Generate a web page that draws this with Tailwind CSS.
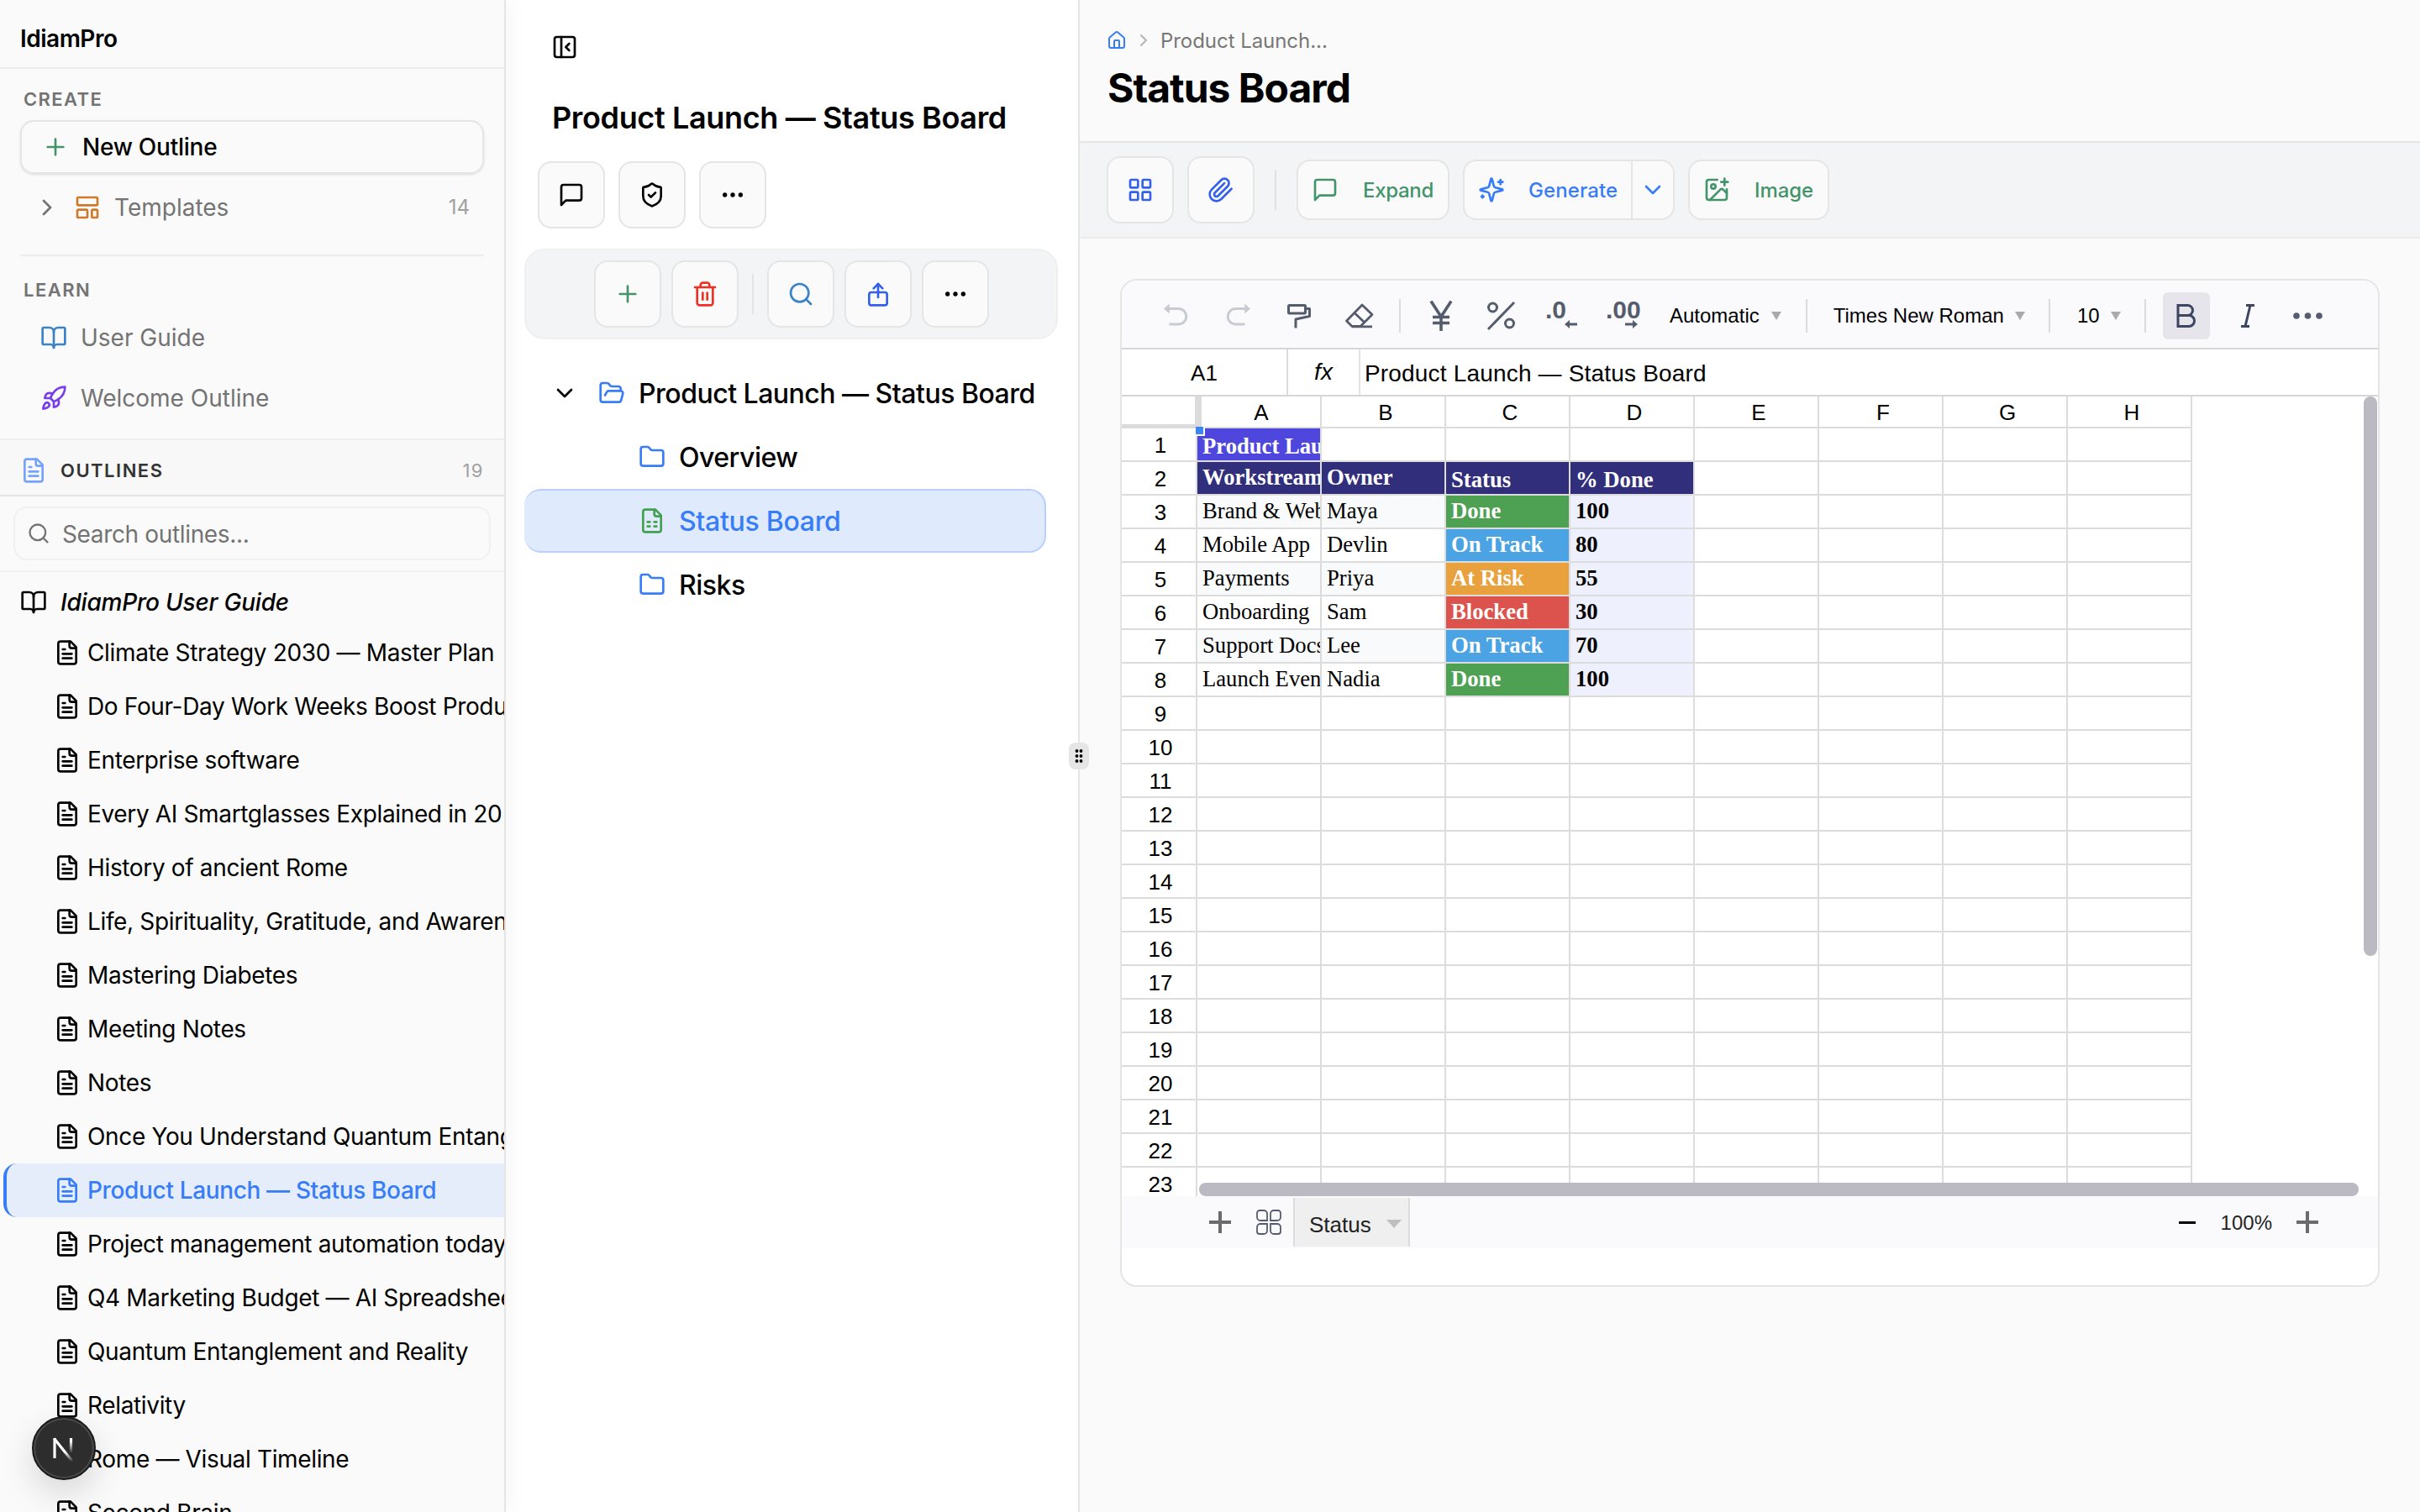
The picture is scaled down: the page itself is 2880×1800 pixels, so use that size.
<!DOCTYPE html>
<html lang="en">
<head>
    <meta charset="UTF-8">
    <meta name="viewport" content="width=device-width, initial-scale=1.0">
    <title>IdiamPro</title>
    <script src="https://cdn.jsdelivr.net/npm/@tailwindcss/browser@4"></script>
</head>
<body class="w-[2880px] h-[1800px] overflow-hidden bg-white text-black font-['Inter',sans-serif]">

    <!-- Icon sprite -->
    <svg class="hidden" fill="none">
        <symbol id="plus" viewBox="0 0 24 24"><path d="M5 12h14M12 5v14"/></symbol>
        <symbol id="chevron-right" viewBox="0 0 24 24"><path d="m9 18 6-6-6-6"/></symbol>
        <symbol id="chevron-down" viewBox="0 0 24 24"><path d="m6 9 6 6 6-6"/></symbol>
        <symbol id="template" viewBox="0 0 24 24"><rect width="18" height="7" x="3" y="3" rx="1"/><rect width="9" height="7" x="3" y="14" rx="1"/><rect width="5" height="7" x="16" y="14" rx="1"/></symbol>
        <symbol id="book" viewBox="0 0 24 24"><path d="M12 7v14"/><path d="M3 18a1 1 0 0 1-1-1V4a1 1 0 0 1 1-1h5a4 4 0 0 1 4 4 4 4 0 0 1 4-4h5a1 1 0 0 1 1 1v13a1 1 0 0 1-1 1h-6a3 3 0 0 0-3 3 3 3 0 0 0-3-3z"/></symbol>
        <symbol id="rocket" viewBox="0 0 24 24"><path d="M4.5 16.5c-1.5 1.26-2 5-2 5s3.74-.5 5-2c.71-.84.7-2.13-.09-2.91a2.18 2.18 0 0 0-2.91-.09z"/><path d="m12 15-3-3a22 22 0 0 1 2-3.95A12.88 12.88 0 0 1 22 2c0 2.72-.78 7.5-6 11a22.35 22.35 0 0 1-4 2z"/><path d="M9 12H4s.55-3.03 2-4c1.62-1.08 5 0 5 0"/><path d="M12 15v5s3.03-.55 4-2c1.08-1.62 0-5 0-5"/></symbol>
        <symbol id="file-text" viewBox="0 0 24 24"><path d="M15 2H6a2 2 0 0 0-2 2v16a2 2 0 0 0 2 2h12a2 2 0 0 0 2-2V7Z"/><path d="M14 2v4a2 2 0 0 0 2 2h4"/><path d="M10 9H8"/><path d="M16 13H8"/><path d="M16 17H8"/></symbol>
        <symbol id="file-sheet" viewBox="0 0 24 24"><path d="M15 2H6a2 2 0 0 0-2 2v16a2 2 0 0 0 2 2h12a2 2 0 0 0 2-2V7Z"/><path d="M14 2v4a2 2 0 0 0 2 2h4"/><path d="M8 13h2"/><path d="M14 13h2"/><path d="M8 17h2"/><path d="M14 17h2"/></symbol>
        <symbol id="search" viewBox="0 0 24 24"><circle cx="11" cy="11" r="8"/><path d="m21 21-4.3-4.3"/></symbol>
        <symbol id="panel" viewBox="0 0 24 24"><rect width="18" height="18" x="3" y="3" rx="2"/><path d="M9 3v18"/><path d="m16 15-3-3 3-3"/></symbol>
        <symbol id="message" viewBox="0 0 24 24"><path d="M21 15a2 2 0 0 1-2 2H7l-4 4V5a2 2 0 0 1 2-2h14a2 2 0 0 1 2 2z"/></symbol>
        <symbol id="shield" viewBox="0 0 24 24"><path d="M20 13c0 5-3.5 7.5-7.66 8.95a1 1 0 0 1-.67-.01C7.5 20.5 4 18 4 13V6a1 1 0 0 1 1-1c2 0 4.5-1.2 6.24-2.72a1.17 1.17 0 0 1 1.52 0C14.51 3.81 17 5 19 5a1 1 0 0 1 1 1z"/><path d="m9 12 2 2 4-4"/></symbol>
        <symbol id="more" viewBox="0 0 24 24"><circle cx="12" cy="12" r="1"/><circle cx="19" cy="12" r="1"/><circle cx="5" cy="12" r="1"/></symbol>
        <symbol id="trash" viewBox="0 0 24 24"><path d="M3 6h18"/><path d="M19 6v14c0 1-1 2-2 2H7c-1 0-2-1-2-2V6"/><path d="M8 6V4c0-1 1-2 2-2h4c1 0 2 1 2 2v2"/><path d="M10 11v6"/><path d="M14 11v6"/></symbol>
        <symbol id="share" viewBox="0 0 24 24"><rect x="4" y="10.5" width="16" height="11.5" rx="2"/><path d="M12 3v12"/><path d="m8 7 4-4 4 4"/></symbol>
        <symbol id="folder" viewBox="0 0 24 24"><path d="M20 20a2 2 0 0 0 2-2V8a2 2 0 0 0-2-2h-7.9a2 2 0 0 1-1.69-.9L9.6 3.9A2 2 0 0 0 7.93 3H4a2 2 0 0 0-2 2v13a2 2 0 0 0 2 2Z"/></symbol>
        <symbol id="folder-open" viewBox="0 0 24 24"><path d="m6 14 1.5-2.9A2 2 0 0 1 9.24 10H20a2 2 0 0 1 1.94 2.5l-1.54 6a2 2 0 0 1-1.95 1.5H4a2 2 0 0 1-2-2V5a2 2 0 0 1 2-2h3.9a2 2 0 0 1 1.69.9l.81 1.2a2 2 0 0 0 1.67.9H18a2 2 0 0 1 2 2v2"/></symbol>
        <symbol id="home" viewBox="0 0 24 24"><path d="M15 21v-8a1 1 0 0 0-1-1h-4a1 1 0 0 0-1 1v8"/><path d="M3 10a2 2 0 0 1 .709-1.528l7-5.999a2 2 0 0 1 2.582 0l7 5.999A2 2 0 0 1 21 10v9a2 2 0 0 1-2 2H5a2 2 0 0 1-2-2z"/></symbol>
        <symbol id="grid" viewBox="0 0 24 24"><rect width="7" height="7" x="3" y="3" rx="1"/><rect width="7" height="7" x="14" y="3" rx="1"/><rect width="7" height="7" x="14" y="14" rx="1"/><rect width="7" height="7" x="3" y="14" rx="1"/></symbol>
        <symbol id="clip" viewBox="0 0 24 24"><path d="m21.44 11.05-9.19 9.19a6 6 0 0 1-8.49-8.49l8.57-8.57A4 4 0 1 1 18 8.84l-8.59 8.57a2 2 0 0 1-2.83-2.83l8.49-8.48"/></symbol>
        <symbol id="sparkles" viewBox="0 0 24 24"><path d="M9.937 15.5A2 2 0 0 0 8.5 14.063l-6.135-1.582a.5.5 0 0 1 0-.962L8.5 9.936A2 2 0 0 0 9.937 8.5l1.582-6.135a.5.5 0 0 1 .963 0L14.063 8.5A2 2 0 0 0 15.5 9.937l6.135 1.581a.5.5 0 0 1 0 .964L15.5 14.063a2 2 0 0 0-1.437 1.437l-1.582 6.135a.5.5 0 0 1-.963 0z"/><path d="M20 3v4"/><path d="M22 5h-4"/><path d="M4 17v2"/><path d="M5 18H3"/></symbol>
        <symbol id="image-plus" viewBox="0 0 24 24"><path d="M16 5h6"/><path d="M19 2v6"/><path d="M21 11.5V19a2 2 0 0 1-2 2H5a2 2 0 0 1-2-2V5a2 2 0 0 1 2-2h7.5"/><path d="m21 15-3.086-3.086a2 2 0 0 0-2.828 0L6 21"/><circle cx="9" cy="9" r="2"/></symbol>
    </svg>

    <div class="flex h-full">

        <!-- Left sidebar -->
        <aside class="relative z-10 w-[602px] shrink-0 h-full overflow-hidden bg-[#fafafa] border-r-2 border-[#e5e5e5] shadow-[2px_0_24px_rgba(0,0,0,0.05)] text-[28px]">
            <div class="h-[82px] border-b-2 border-[#ececec] pl-6 pt-3 flex items-center font-semibold tracking-[-0.5px]">IdiamPro</div>

            <div class="h-[440px] px-6 pt-5">
                <div class="h-8 pl-1 flex items-center text-[22px] font-semibold text-[#737373] tracking-[1.4px]">CREATE</div>
                <div class="mt-[9px] h-16 rounded-2xl border-2 border-[#e5e5e5] shadow-sm flex items-center pl-6 font-medium">
                    <svg class="size-8 text-[#43946a]" fill="none" stroke="currentColor" stroke-width="2" stroke-linecap="round" stroke-linejoin="round"><use href="#plus"/></svg>
                    <span class="ml-4 tracking-[-0.25px]">New Outline</span>
                </div>
                <div class="mt-2 h-16 flex items-center pl-4 pr-[17px] text-[#737373]">
                    <svg class="size-8" fill="none" stroke="currentColor" stroke-width="2" stroke-linecap="round" stroke-linejoin="round"><use href="#chevron-right"/></svg>
                    <svg class="ml-4 size-8 text-[#cf7a2b]" fill="none" stroke="currentColor" stroke-width="2" stroke-linecap="round" stroke-linejoin="round"><use href="#template"/></svg>
                    <span class="ml-4">Templates</span>
                    <span class="ml-auto text-2xl text-[#a0a0a0]">14</span>
                </div>
                <div class="mt-6 h-[2px] bg-[#ececec]"></div>
                <div class="mt-6 h-8 pl-1 flex items-center text-[22px] font-semibold text-[#737373] tracking-[1.5px]">LEARN</div>
                <div class="mt-[9px] h-16 flex items-center pl-6 text-[#737373]">
                    <svg class="size-8 text-[#3a83c4]" fill="none" stroke="currentColor" stroke-width="2" stroke-linecap="round" stroke-linejoin="round"><use href="#book"/></svg>
                    <span class="ml-4">User Guide</span>
                </div>
                <div class="mt-2 h-16 flex items-center pl-6 text-[#737373]">
                    <svg class="size-8 text-[#7a3fe8]" fill="none" stroke="currentColor" stroke-width="2" stroke-linecap="round" stroke-linejoin="round"><use href="#rocket"/></svg>
                    <span class="ml-4">Welcome Outline</span>
                </div>
            </div>

            <div class="h-[69px] border-y-2 border-t-[#ededed] border-b-[#e5e5e5] bg-[#f8f8f8] pl-6 pr-6 pt-[7px] flex items-center text-[22px] font-semibold text-[#333]">
                <svg class="size-8 text-[#74a3fb]" fill="none" stroke="currentColor" stroke-width="2" stroke-linecap="round" stroke-linejoin="round"><use href="#file-text"/></svg>
                <span class="ml-4 tracking-[1.5px]">OUTLINES</span>
                <span class="ml-auto font-normal text-[#a0a0a0] tracking-[1.5px]">19</span>
            </div>
            <div class="h-[90px] border-b-2 border-[#f0f0f0] px-4 pt-3">
                <div class="h-16 rounded-2xl border-2 border-[#f0f0f0] flex items-center pl-[14px] text-[#737373]">
                    <svg class="size-7" fill="none" stroke="currentColor" stroke-width="2" stroke-linecap="round" stroke-linejoin="round"><use href="#search"/></svg>
                    <span class="ml-[14px] pt-[2px] tracking-[-0.35px]">Search outlines...</span>
                </div>
            </div>
            <div class="h-16 pt-2 pl-6 flex items-center font-medium italic">
                <svg class="size-8" fill="none" stroke="currentColor" stroke-width="2" stroke-linecap="round" stroke-linejoin="round"><use href="#book"/></svg>
                <span class="ml-4 tracking-[-0.2px]">IdiamPro User Guide</span>
            </div>
            <div id="outlines" class="tracking-[-0.35px]"></div>
        </aside>

        <!-- Outline tree -->
        <section class="w-[683px] shrink-0 h-full border-r-2 border-[#e5e5e5] bg-white pl-[22px]">
            <div class="h-[112px] pl-8 flex items-center">
                <svg class="size-8" fill="none" stroke="currentColor" stroke-width="2" stroke-linecap="round" stroke-linejoin="round"><use href="#panel"/></svg>
            </div>
            <div class="h-[56px] pl-[33px] flex items-center text-4xl font-semibold tracking-[-0.36px]">Product Launch — Status Board</div>
            <div class="mt-6 pl-4 flex gap-4">
                <div class="size-20 rounded-2xl border-2 border-[#e5e5e5] bg-[#fafafa] flex items-center justify-center"><svg class="size-8" fill="none" stroke="currentColor" stroke-width="2" stroke-linecap="round" stroke-linejoin="round"><use href="#message"/></svg></div>
                <div class="size-20 rounded-2xl border-2 border-[#e5e5e5] bg-[#fafafa] flex items-center justify-center"><svg class="size-8" fill="none" stroke="currentColor" stroke-width="2" stroke-linecap="round" stroke-linejoin="round"><use href="#shield"/></svg></div>
                <div class="size-20 rounded-2xl border-2 border-[#e5e5e5] bg-[#fafafa] flex items-center justify-center"><svg class="size-8" fill="none" stroke="currentColor" stroke-width="2" stroke-linecap="round" stroke-linejoin="round"><use href="#more"/></svg></div>
            </div>
            <div class="mt-6 w-[635px] h-[108px] rounded-3xl border-2 border-[#efeff0] bg-[#f3f4f6] flex items-center justify-center gap-3">
                <div class="size-20 rounded-2xl border-2 border-[#e5e5e5] bg-[#fafafa] flex items-center justify-center text-[#43946a]"><svg class="size-8" fill="none" stroke="currentColor" stroke-width="2" stroke-linecap="round" stroke-linejoin="round"><use href="#plus"/></svg></div>
                <div class="size-20 rounded-2xl border-2 border-[#e5e5e5] bg-[#fafafa] flex items-center justify-center text-[#ee3124]"><svg class="size-8" fill="none" stroke="currentColor" stroke-width="2" stroke-linecap="round" stroke-linejoin="round"><use href="#trash"/></svg></div>
                <div class="w-[2px] h-12 mx-1 bg-[#e5e5e5]"></div>
                <div class="size-20 rounded-2xl border-2 border-[#e5e5e5] bg-[#fafafa] flex items-center justify-center text-[#3a83c4]"><svg class="size-8" fill="none" stroke="currentColor" stroke-width="2" stroke-linecap="round" stroke-linejoin="round"><use href="#search"/></svg></div>
                <div class="size-20 rounded-2xl border-2 border-[#e5e5e5] bg-[#fafafa] flex items-center justify-center text-[#3461eb]"><svg class="size-8" fill="none" stroke="currentColor" stroke-width="2" stroke-linecap="round" stroke-linejoin="round"><use href="#share"/></svg></div>
                <div class="size-20 rounded-2xl border-2 border-[#e5e5e5] bg-[#fafafa] flex items-center justify-center"><svg class="size-8" fill="none" stroke="currentColor" stroke-width="2" stroke-linecap="round" stroke-linejoin="round"><use href="#more"/></svg></div>
            </div>
            <div class="pt-[26px] text-[32px] font-medium tracking-[-0.5px]">
                <div class="h-[76px] flex items-center pl-8">
                    <svg class="size-8" fill="none" stroke="currentColor" stroke-width="2" stroke-linecap="round" stroke-linejoin="round"><use href="#chevron-down"/></svg>
                    <svg class="ml-6 size-8 text-[#377df7]" fill="none" stroke="currentColor" stroke-width="2" stroke-linecap="round" stroke-linejoin="round"><use href="#folder-open"/></svg>
                    <span class="ml-4 pt-[2px] whitespace-nowrap">Product Launch — Status Board</span>
                </div>
                <div class="h-[76px] flex items-center pl-[136px]">
                    <svg class="size-8 text-[#377df7]" fill="none" stroke="currentColor" stroke-width="2" stroke-linecap="round" stroke-linejoin="round"><use href="#folder"/></svg>
                    <span class="ml-4 pt-[2px]">Overview</span>
                </div>
                <div class="w-[621px] h-[76px] rounded-[20px] border-2 border-l-0 border-[#b9d0fa] bg-[#e0eafd] flex items-center pl-[136px] text-[#377df7]">
                    <svg class="size-8 text-[#43a050]" fill="none" stroke="currentColor" stroke-width="2" stroke-linecap="round" stroke-linejoin="round"><use href="#file-sheet"/></svg>
                    <span class="ml-4 pt-[2px] tracking-[-0.3px]">Status Board</span>
                </div>
                <div class="h-[76px] flex items-center pl-[136px]">
                    <svg class="size-8 text-[#377df7]" fill="none" stroke="currentColor" stroke-width="2" stroke-linecap="round" stroke-linejoin="round"><use href="#folder"/></svg>
                    <span class="ml-4 pt-[2px]">Risks</span>
                </div>
            </div>
        </section>

        <!-- Content pane -->
        <main class="w-[1595px] h-full bg-[#fafafa]">
            <header class="h-[170px] border-b-2 border-[#e5e5e5] pl-8 pt-[30px]">
                <div class="h-9 flex items-center text-2xl text-[#777]">
                    <svg class="size-6 text-[#377df7]" fill="none" stroke="currentColor" stroke-width="2" stroke-linecap="round" stroke-linejoin="round"><use href="#home"/></svg>
                    <svg class="ml-2 size-6 text-[#b5b5b5]" fill="none" stroke="currentColor" stroke-width="2" stroke-linecap="round" stroke-linejoin="round"><use href="#chevron-right"/></svg>
                    <span class="ml-2 pt-[2px] tracking-[-0.05px]">Product Launch...</span>
                </div>
                <div class="h-[56px] mt-[11px] pl-[1px] flex items-center text-[48px] font-bold tracking-[-1px]">Status Board</div>
            </header>
            <div class="h-[114px] border-b-2 border-[#ececed] bg-[#f3f4f6] pl-8 flex items-center gap-4 text-2xl font-medium">
                <div class="size-20 rounded-2xl border-2 border-[#e5e5e5] bg-[#fafafa] flex items-center justify-center text-[#3461eb]"><svg class="size-8" fill="none" stroke="currentColor" stroke-width="2" stroke-linecap="round" stroke-linejoin="round"><use href="#grid"/></svg></div>
                <div class="size-20 rounded-2xl border-2 border-[#e5e5e5] bg-[#fafafa] flex items-center justify-center text-[#3461eb]"><svg class="size-8" fill="none" stroke="currentColor" stroke-width="2" stroke-linecap="round" stroke-linejoin="round"><use href="#clip"/></svg></div>
                <div class="w-[2px] h-12 mx-2 bg-[#e0e0e2]"></div>
                <div class="w-[182px] h-[72px] rounded-2xl border-2 border-[#e5e5e5] bg-[#fafafa] flex items-center pl-4 text-[#43946a]">
                    <svg class="size-8" fill="none" stroke="currentColor" stroke-width="2" stroke-linecap="round" stroke-linejoin="round"><use href="#message"/></svg>
                    <span class="ml-[29px] pt-[2px] tracking-[-0.3px]">Expand</span>
                </div>
                <div class="w-[252px] h-[72px] rounded-2xl border-2 border-[#e5e5e5] bg-[#fafafa] flex items-center pl-4 text-[#377df7]">
                    <svg class="size-8" fill="none" stroke="currentColor" stroke-width="2" stroke-linecap="round" stroke-linejoin="round"><use href="#sparkles"/></svg>
                    <span class="ml-7 pt-[2px] tracking-[0.1px]">Generate</span>
                    <span class="ml-auto w-[50px] h-full border-l-2 border-[#e5e5e5] flex items-center justify-center"><svg class="size-8" fill="none" stroke="currentColor" stroke-width="2" stroke-linecap="round" stroke-linejoin="round"><use href="#chevron-down"/></svg></span>
                </div>
                <div class="w-[168px] h-[72px] rounded-2xl border-2 border-[#e5e5e5] bg-[#fafafa] flex items-center pl-4 text-[#43946a]">
                    <svg class="size-8" fill="none" stroke="currentColor" stroke-width="2" stroke-linecap="round" stroke-linejoin="round"><use href="#image-plus"/></svg>
                    <span class="ml-[29px] pt-[2px] tracking-[-0.1px]">Image</span>
                </div>
            </div>

            <!-- Spreadsheet card -->
            <div class="mt-12 ml-12 w-[1499px] h-[1200px] rounded-[20px] border-2 border-[#e5e5e5] bg-white overflow-hidden font-['Liberation_Sans',sans-serif]">
                <div class="h-[82px] pt-1 border-b-2 border-[#d6d6d8] bg-[#fafafd] flex items-center text-2xl text-[#545c6e]">
                    <svg class="ml-[48px] w-8 h-8 text-[#c9cbd3]" viewBox="0 0 32 32" fill="none" stroke="currentColor" stroke-width="3"><path d="M8 7.500h11.500a9.200 9.200 0 0 1 0 18.500H8.500"/><path d="M2 7.500 8.800 1.500v12z" fill="currentColor" stroke="none"/></svg>
                    <svg class="ml-[43px] w-8 h-8 text-[#c9cbd3]" viewBox="0 0 32 32" fill="none" stroke="currentColor" stroke-width="3"><path d="M24 7.500H12.500a9.200 9.200 0 0 0 0 18.500h11"/><path d="M30 7.500 23.200 1.500v12z" fill="currentColor" stroke="none"/></svg>
                    <svg class="ml-[40px] w-8 h-8" viewBox="0 0 32 32" fill="none" stroke="currentColor" stroke-width="3" stroke-linejoin="round"><rect x="3.500" y="3.500" width="20" height="9.500" rx="1"/><path d="M24 7.500h4.500v9L12 20v10.500"/></svg>
                    <svg class="ml-[37px] w-9 h-8" viewBox="0 0 36 32" fill="none" stroke="currentColor" stroke-width="2.800" stroke-linejoin="round"><path d="M22 3 34 14.500 20 28.500H10L3.500 22z"/><path d="m13 12.500 12 11.500M10 28.800h24"/></svg>
                    <div class="ml-[30px] w-[2px] h-10 bg-[#dcdce0]"></div>
                    <svg class="ml-[32px] w-8 h-9" viewBox="0 0 32 36" fill="none" stroke="currentColor" stroke-width="3.600"><path d="M4 0.500 16 19 28 0.500M16 18v18M6 19.500h20M6 26.500h20"/></svg>
                    <svg class="ml-[36px] w-10 h-9" viewBox="0 0 40 36" fill="none" stroke="currentColor" stroke-width="3"><circle cx="9.500" cy="8" r="5"/><circle cx="29.500" cy="27" r="5"/><path d="M35 2 4 34"/></svg>
                    <div class="relative ml-[32px] w-[44px] h-9 font-bold leading-none text-[30px]"><span class="absolute -top-[4px] left-0">.0</span><svg class="absolute left-[23px] top-[22px] w-4 h-3" viewBox="0 0 16 12" fill="currentColor"><path d="M0 6 6 1v3.500h9v3H6V11z"/></svg></div>
                    <div class="relative ml-[28px] w-[44px] h-9 font-bold leading-none text-[30px]"><span class="absolute -top-[4px] left-0">.00</span><svg class="absolute left-[23px] top-[22px] w-4 h-3" viewBox="0 0 16 12" fill="currentColor"><path d="M15 6 9 1v3.500H0v3h9V11z"/></svg></div>
                    <span class="ml-[32px] text-black">Automatic</span>
                    <svg class="ml-[14px] w-3 h-[10px] text-[#aaa]" viewBox="0 0 12 10" fill="currentColor"><path d="M0 0h12L6 10z"/></svg>
                    <div class="ml-[29px] w-[2px] h-10 bg-[#dcdce0]"></div>
                    <span class="ml-[31px] text-black">Times New Roman</span>
                    <svg class="ml-[13px] w-3 h-[10px] text-[#aaa]" viewBox="0 0 12 10" fill="currentColor"><path d="M0 0h12L6 10z"/></svg>
                    <div class="ml-[28px] w-[2px] h-10 bg-[#dcdce0]"></div>
                    <span class="ml-[32px] text-black">10</span>
                    <svg class="ml-[13px] w-3 h-[10px] text-[#aaa]" viewBox="0 0 12 10" fill="currentColor"><path d="M0 0h12L6 10z"/></svg>
                    <div class="ml-[28px] w-[2px] h-10 bg-[#dcdce0]"></div>
                    <div class="ml-[20px] w-14 h-14 rounded-md bg-[#e7e5ec] flex items-center justify-center">
                        <svg class="w-7 h-8 text-[#3d4560]" viewBox="0 0 28 32" fill="none" stroke="currentColor" stroke-width="3"><path d="M4 3.500h11.500a6 6 0 0 1 0 12H4zM4 15.500h13a6.500 6.500 0 0 1 0 13H4z"/></svg>
                    </div>
                    <svg class="ml-[37px] w-4 h-8 text-[#3d4560]" viewBox="0 0 16 32" fill="none" stroke="currentColor" stroke-width="3"><path d="M6 3.500h10M0 28.500h10M11 3.500 5 28.500"/></svg>
                    <svg class="ml-[46px] w-9 h-2" viewBox="0 0 36 8" fill="currentColor"><circle cx="4" cy="4" r="3.800"/><circle cx="17.500" cy="4" r="3.800"/><circle cx="31" cy="4" r="3.800"/></svg>
                </div>
                <div class="h-[56px] border-b-2 border-[#d6d6d8] flex items-center">
                    <div class="w-[198px] h-full pt-[2px] border-r-2 border-[#dcdcdc] flex items-center justify-center text-[26px]">A1</div>
                    <div class="w-[86px] h-full border-r-2 border-[#e4e4e4] flex items-center justify-center text-[28px] italic">fx</div>
                    <span class="ml-[5px] pt-[3px] text-[28px] tracking-[0.18px]">Product Launch — Status Board</span>
                </div>
                <div class="relative h-[952px] overflow-hidden">
                    <div id="sheet" class="w-[1274px] text-[26px]"></div>
                    <!-- corner, selection handle and scrollbars lie over the grid -->
                    <div class="absolute left-0 top-0 w-[95px] h-[38px] border-r-8 border-b-[5px] border-[#dcdcdc]"></div>
                    <div class="absolute left-[88px] top-[36px] size-[11px] border-r-2 border-b-2 border-white bg-[#3b86f0]"></div>
                    <div class="absolute left-[1478px] top-0 w-4 h-[666px] rounded-full bg-[#bbb9c1]"></div>
                    <div class="absolute left-[92px] top-[936px] w-[1380px] h-4 rounded-full bg-[#bbb9c1]"></div>
                </div>
                <div class="h-[62px] bg-[#fafafd] flex items-center text-[26px] text-[#222]">
                    <svg class="ml-[104px] w-[26px] h-[26px] text-[#6b6b6b]" viewBox="0 0 26 26" stroke="currentColor" stroke-width="4"><path d="M0 13h26M13 0v26"/></svg>
                    <svg class="ml-[29px] w-8 h-8 text-[#545c6e]" viewBox="0 0 32 32" fill="none" stroke="currentColor" stroke-width="1.800"><path d="M5 2h5a4 4 0 0 1 4 4v8H6a4 4 0 0 1-4-4V5a3 3 0 0 1 3-3zM27 2h-5a4 4 0 0 0-4 4v8h8a4 4 0 0 0 4-4V5a3 3 0 0 0-3-3zM5 30h5a4 4 0 0 0 4-4v-8H6a4 4 0 0 0-4 4v5a3 3 0 0 0 3 3zM27 30h-5a4 4 0 0 1-4-4v-8h8a4 4 0 0 1 4 4v5a3 3 0 0 1-3 3z"/></svg>
                    <div class="ml-[13px] w-[139px] h-[58px] border-x-2 border-[#dcdcdc] bg-[#efefef] flex items-center pl-[17px] pt-1">
                        <span class="pt-[3px]">Status</span>
                        <svg class="ml-[18px] w-[18px] h-[10px] text-[#bfbfbf]" viewBox="0 0 18 10" fill="currentColor"><path d="M0 0h18L9 10z"/></svg>
                    </div>
                    <div class="ml-auto mr-[71px] flex items-center text-2xl">
                        <div class="w-5 h-[3px] bg-black"></div>
                        <span class="ml-[30px] pt-[2px]">100%</span>
                        <svg class="ml-[29px] w-[26px] h-[26px] text-[#6b6b6b]" viewBox="0 0 26 26" stroke="currentColor" stroke-width="4"><path d="M0 13h26M13 0v26"/></svg>
                    </div>
                </div>
            </div>
        </main>
    </div>

    <!-- Pane resize handle -->
    <div class="absolute z-20 left-[1272px] top-[884px] w-6 h-8 rounded-lg bg-[#e5e5e5] flex items-center justify-center">
        <svg class="w-3 h-6" viewBox="0 0 12 24"><circle cx="3.500" cy="6" r="1.900"/><circle cx="8.500" cy="6" r="1.900"/><circle cx="3.500" cy="12" r="1.900"/><circle cx="8.500" cy="12" r="1.900"/><circle cx="3.500" cy="18" r="1.900"/><circle cx="8.500" cy="18" r="1.900"/></svg>
    </div>

    <!-- Next.js dev badge -->
    <div class="absolute z-20 left-[38px] top-[1686px] size-[76px] rounded-full border-2 border-[#1b1b1b] bg-[#2d2d2d] ring-2 ring-inset ring-[#4a4a4a] shadow-[0_16px_40px_rgba(0,0,0,0.14)] flex items-center justify-center">
        <svg class="w-8 h-8" viewBox="0 0 32 32" fill="none" stroke-width="3.200">
            <defs>
                <linearGradient id="n1" x1="0" y1="0" x2="0" y2="1"><stop offset=".6" stop-color="#fff"/><stop offset="1" stop-color="#fff" stop-opacity=".1"/></linearGradient>
                <linearGradient id="n2" x1="0" y1="4" x2="0" y2="22" gradientUnits="userSpaceOnUse"><stop offset=".2" stop-color="#fff"/><stop offset="1" stop-color="#fff" stop-opacity="0"/></linearGradient>
            </defs>
            <path d="M5 28V4" stroke="#fff"/><path d="M4.500 4.500 25.500 31" stroke="url(#n1)"/><path d="M24.500 4v18" stroke="url(#n2)"/>
        </svg>
    </div>

    <script>
        // Sidebar outlines
        const outlines = [
            'Climate Strategy 2030 — Master Plan', 'Do Four-Day Work Weeks Boost Productivity?', 'Enterprise software',
            'Every AI Smartglasses Explained in 20 Minutes', 'History of ancient Rome', 'Life, Spirituality, Gratitude, and Awareness',
            'Mastering Diabetes', 'Meeting Notes', 'Notes', 'Once You Understand Quantum Entanglement',
            'Product Launch — Status Board', 'Project management automation today', 'Q4 Marketing Budget — AI Spreadsheet',
            'Quantum Entanglement and Reality', 'Relativity', 'Rome — Visual Timeline', 'Second Brain'
        ];
        document.getElementById('outlines').innerHTML = outlines.map(name => {
            const active = name === 'Product Launch — Status Board';
            return `<div class="${active ? 'ml-1 pl-[56px] border-l-4 border-[#377df7] rounded-l-2xl bg-[#e5edfb] text-[#377df7] font-medium' : 'pl-16'} h-16 flex items-center">
                <svg class="size-8 shrink-0" fill="none" stroke="currentColor" stroke-width="2" stroke-linecap="round" stroke-linejoin="round"><use href="#file-text"/></svg>
                <span class="ml-2 whitespace-nowrap">${name}</span>
            </div>`;
        }).join('');

        // Spreadsheet grid
        const statusColors = { 'Done': 'bg-[#4ea153]', 'On Track': 'bg-[#4ba3e3]', 'At Risk': 'bg-[#e8a13c]', 'Blocked': 'bg-[#dc524c]' };
        const rows = [
            ['Product Launch — Status Board'],
            ['Workstream', 'Owner', 'Status', '% Done'],
            ['Brand & Website', 'Maya', 'Done', '100'],
            ['Mobile App', 'Devlin', 'On Track', '80'],
            ['Payments', 'Priya', 'At Risk', '55'],
            ['Onboarding', 'Sam', 'Blocked', '30'],
            ['Support Docs', 'Lee', 'On Track', '70'],
            ['Launch Event', 'Nadia', 'Done', '100']
        ];
        function cellStyle(r, c, text) {
            if (!text) return '';
            if (r === 0) return 'bg-[#4f47dd] text-white font-bold pt-1';
            if (r === 1) return 'bg-[#312e7b] text-white font-bold ' + (c > 1 ? 'pt-1' : 'pb-[2px]');
            if (c === 2) return statusColors[text] + ' text-white font-bold pb-[2px]';
            if (c === 3) return 'bg-[#eef0fe] font-bold pb-[2px]';
            return r % 2 === 0 ? 'bg-[#f9fafb] pb-[2px]' : 'pb-[2px]';
        }
        let html = '<div class="flex h-[38px] border-b-2 border-[#dcdcdc]"><div class="w-[90px] border-r-2 border-[#dcdcdc]"></div>';
        for (const l of 'ABCDEFGH') html += `<div class="w-[148px] border-r-2 border-[#dcdcdc] pl-[6px] pt-[2px] flex items-center justify-center">${l}</div>`;
        html += '</div>';
        for (let r = 0; r < 23; r++) {
            html += `<div class="flex h-10 border-b-2 border-[#dcdcdc]"><div class="w-[90px] border-r-2 border-[#dcdcdc] pl-1 pt-[2px] flex items-center justify-center">${r + 1}</div>`;
            for (let c = 0; c < 8; c++) {
                const text = (rows[r] || [])[c] || '';
                html += `<div class="w-[148px] border-r-2 border-[#dcdcdc] pl-[6px] overflow-hidden whitespace-nowrap flex items-center font-['Liberation_Serif',serif] text-[26.67px] ${cellStyle(r, c, text)}">${text.replace('&', '&amp;')}</div>`;
            }
            html += '</div>';
        }
        document.getElementById('sheet').innerHTML = html;
    </script>
</body>
</html>
